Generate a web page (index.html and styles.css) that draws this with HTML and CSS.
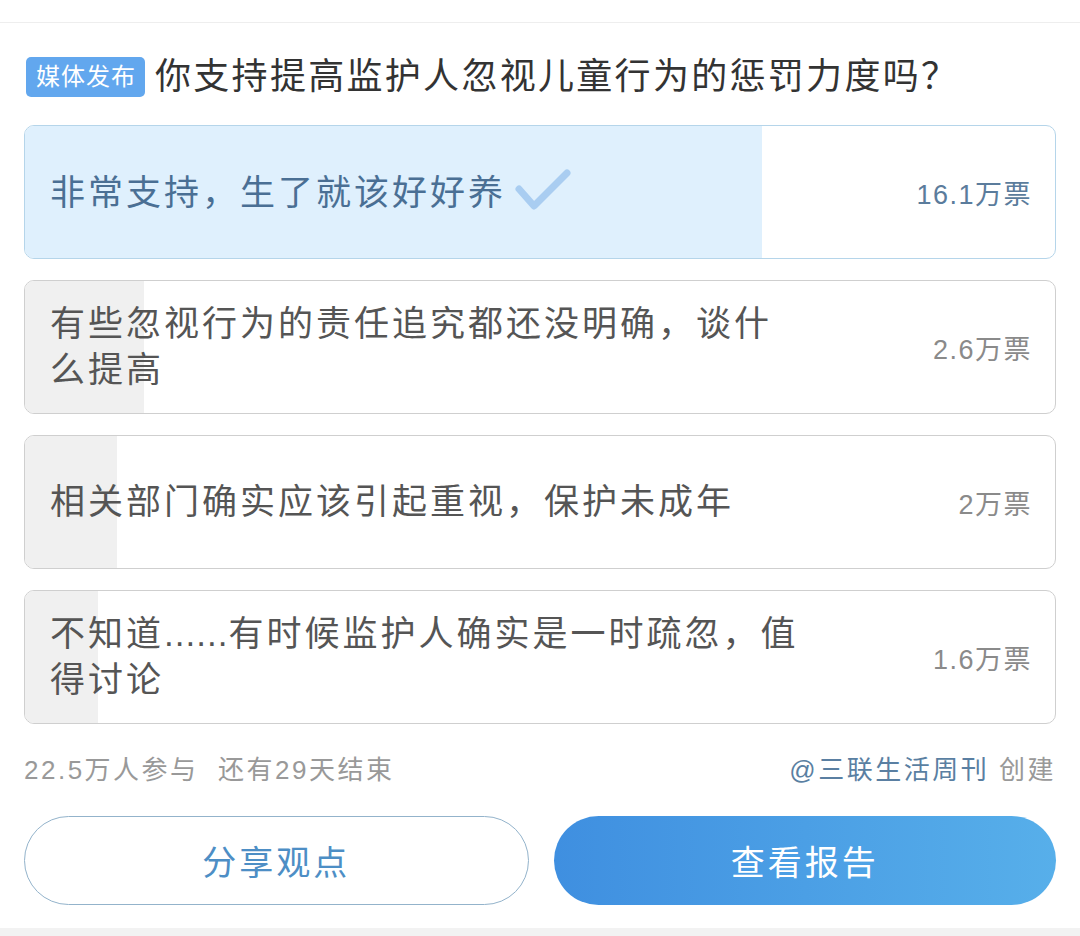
FILE: index.html
```html
<!DOCTYPE html>
<html lang="zh-CN">
<head>
    <meta charset="UTF-8">
    <meta name="viewport" content="width=device-width, initial-scale=1.0">
    <title>投票</title>
    <link rel="stylesheet" href="styles.css">
</head>
<body>

    <div class="top-bar"></div>

    <section class="poll">
        <div class="poll-head">
            <span class="badge">媒体发布</span>
            <h2 class="poll-title">你支持提高监护人忽视儿童行为的惩罚力度吗？</h2>
        </div>

        <div class="options" id="options">
            <!-- options are built below -->
        </div>

        <div class="poll-info">
            <span>22.5万人参与&nbsp;&nbsp;还有29天结束</span>
            <span><a class="author" href="#">@三联生活周刊</a> 创建</span>
        </div>

        <div class="actions">
            <button class="btn-share">分享观点</button>
            <button class="btn-report">查看报告</button>
        </div>
    </section>

    <div class="bottom-band"></div>

    <script>
        const total = 22.5;
        const options = [
            { text: "非常支持，生了就该好好养", votes: 16.1, label: "16.1万票", picked: true },
            { text: "有些忽视行为的责任追究都还没明确，谈什么提高", votes: 2.6, label: "2.6万票" },
            { text: "相关部门确实应该引起重视，保护未成年", votes: 2, label: "2万票" },
            { text: "不知道<span class=\"dots\">......</span>有时候监护人确实是一时疏忽，值得讨论", votes: 1.6, label: "1.6万票" }
        ];

        const check = '<svg class="check" width="56" height="42" viewBox="0 0 56 42">' +
            '<path d="M4 20 L19 37 L52 4" fill="none" stroke="#a9cdf1" stroke-width="7" stroke-linecap="round" stroke-linejoin="round"/></svg>';

        const list = document.getElementById("options");

        options.forEach(opt => {
            const item = document.createElement("div");
            item.classList.add("option");
            if (opt.picked) item.classList.add("picked");
            const pct = (opt.votes / total * 100).toFixed(1);
            item.innerHTML = `
                <div class="fill" style="width: ${pct}%"></div>
                <div class="option-row">
                    <p class="option-text">${opt.text}${opt.picked ? check : ""}</p>
                    <span class="votes">${opt.label}</span>
                </div>
            `;
            list.appendChild(item);
        });
    </script>
</body>
</html>
```

FILE: styles.css
```css
body {
    font-family: "Liberation Sans", "Noto Sans CJK SC", sans-serif;
    background: #ffffff;
    margin: 0;
    color: #333;
}

.top-bar {
    height: 22px;
    border-bottom: 1px solid #eeeeee;
}

.poll {
    padding: 0 24px;
}

/* Header: badge + question */
.poll-head {
    display: flex;
    align-items: center;
    gap: 10px;
    margin-top: 34px;
    height: 40px;
}

.badge {
    background: #62a7ee;
    color: white;
    font-size: 24px;
    letter-spacing: 1px;
    line-height: 40px;
    padding: 0 9px 0 10px;
    border-radius: 5px;
    margin-left: 2px;
}

.poll-title {
    margin: 0;
    font-size: 36px;
    font-weight: normal;
    letter-spacing: 2.3px;
    color: #333;
    line-height: 40px;
}

/* Options */
.options {
    display: flex;
    flex-direction: column;
    gap: 21px;
    margin-top: 28px;
}

.option {
    position: relative;
    box-sizing: border-box;
    height: 134px;
    border: 1px solid #cfcfcf;
    border-radius: 10px;
    overflow: hidden;
}

.option .fill {
    position: absolute;
    top: 0;
    left: 0;
    bottom: 0;
    background: #f0f0f0;
}

.option.picked {
    border-color: #b5d5ea;
}

.option.picked .fill {
    background: #dff0fd;
}

.option-row {
    position: relative;
    display: flex;
    align-items: center;
    justify-content: space-between;
    height: 100%;
    padding: 0 23px 0 25px;
}

.option-text {
    margin: 0;
    max-width: 755px;
    font-size: 35px;
    letter-spacing: 3px;
    line-height: 46px;
    color: #555;
}

.option-text .dots {
    letter-spacing: 1px;
}

.option.picked .option-text {
    color: #4a6f94;
}

.check {
    vertical-align: -6px;
    margin-left: 9px;
}

.votes {
    font-size: 27px;
    letter-spacing: 1.5px;
    color: #8a8a8a;
    white-space: nowrap;
}

.option.picked .votes {
    color: #5b7c9c;
}

/* Participants and author */
.poll-info {
    display: flex;
    justify-content: space-between;
    margin-top: 28px;
    font-size: 26px;
    line-height: 36px;
    letter-spacing: 2.5px;
    color: #999;
}

.author {
    color: #5a7fa2;
    text-decoration: none;
}

/* Buttons */
.actions {
    display: flex;
    gap: 25px;
    margin-top: 28px;
}

.actions button {
    flex: 1;
    height: 89px;
    border-radius: 45px;
    font-family: inherit;
    font-size: 34px;
    letter-spacing: 3px;
    cursor: pointer;
}

.btn-share {
    background: white;
    border: 1px solid #93b3cb;
    color: #4d8ec5;
}

.btn-report {
    background: linear-gradient(90deg, #3f8fe0, #57afea);
    border: none;
    color: white;
}

.bottom-band {
    margin-top: 23px;
    height: 20px;
    background: #f2f2f2;
}
```
